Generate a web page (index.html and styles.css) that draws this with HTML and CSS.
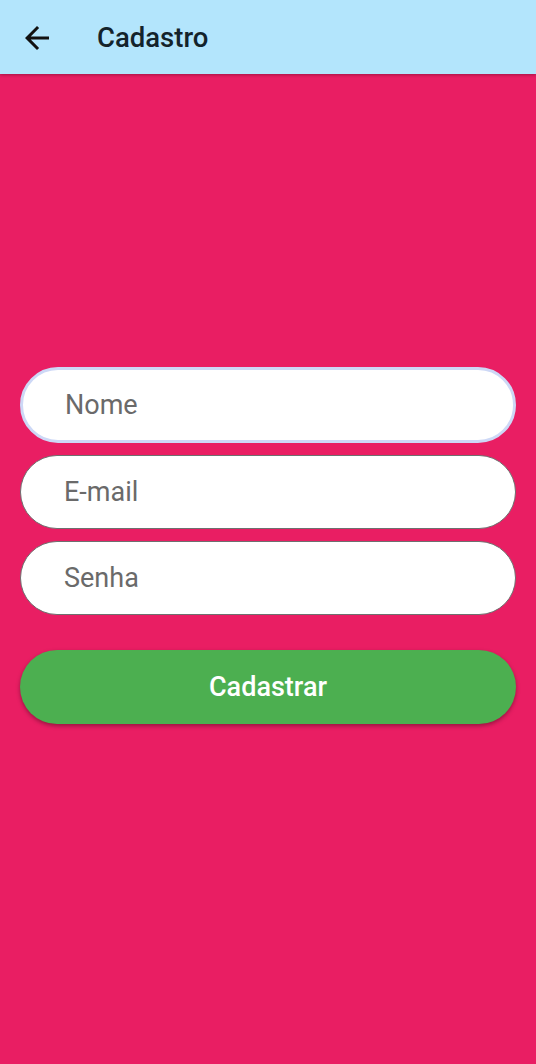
FILE: index.html
```html
<!DOCTYPE html>
<html lang="pt">
<head>
<meta charset="utf-8">
<title>Cadastro</title>
<link rel="stylesheet" href="styles.css">
</head>
<body>
<header class="appbar">
  <svg class="back" viewBox="0 0 24 24" width="36" height="36" aria-hidden="true"><path d="M20 11H7.83l5.59-5.59L12 4l-8 8 8 8 1.41-1.41L7.83 13H20v-2z"/></svg>
  <h1 class="title">Cadastro</h1>
</header>
<main class="content">
  <form class="form">
    <input class="field field-focus" type="text" placeholder="Nome">
    <input class="field" type="email" placeholder="E-mail">
    <input class="field" type="password" placeholder="Senha">
    <button class="submit" type="button">Cadastrar</button>
  </form>
</main>
</body>
</html>
```
FILE: styles.css
```css
html, body {
  margin: 0;
  padding: 0;
  height: 100%;
}
body {
  background: #e91e63;
  font-family: Roboto, "Liberation Sans", sans-serif;
  display: flex;
  flex-direction: column;
}
.appbar {
  height: 74px;
  background: #b3e5fc;
  display: flex;
  align-items: center;
  padding-left: 19px;
  box-shadow: 0 1px 3px rgba(0,0,0,0.3);
  position: relative;
  z-index: 1;
  flex-shrink: 0;
}
.back {
  fill: #111;
  margin-top: 1px;
}
.title {
  margin: 0 0 0 42px;
  font-size: 27.5px;
  font-weight: 500;
  color: #13232b;
}
.content {
  flex: 1;
  padding: 293px 20px 0 20px;
}
.form {
  display: flex;
  flex-direction: column;
  gap: 12px;
}
.field {
  box-sizing: border-box;
  height: 74px;
  width: 100%;
  border: 1.5px solid #6f6f6f;
  border-radius: 37px;
  background: #fff;
  padding: 0 0 0 43px;
  font-family: Roboto, "Liberation Sans", sans-serif;
  font-size: 27px;
  color: #333;
  outline: none;
}
.field::placeholder {
  color: #6a6a6a;
}
.field-focus {
  height: 76px;
  border-radius: 38px;
  border: 3px solid #cdd8f6;
  padding-left: 42px;
}
.submit {
  margin-top: 23px;
  height: 74px;
  border: none;
  border-radius: 37px;
  background: #4caf50;
  color: #fff;
  font-family: Roboto, "Liberation Sans", sans-serif;
  font-size: 27px;
  font-weight: 500;
  box-shadow: 0 2px 4px rgba(0,0,0,0.35);
}
```
